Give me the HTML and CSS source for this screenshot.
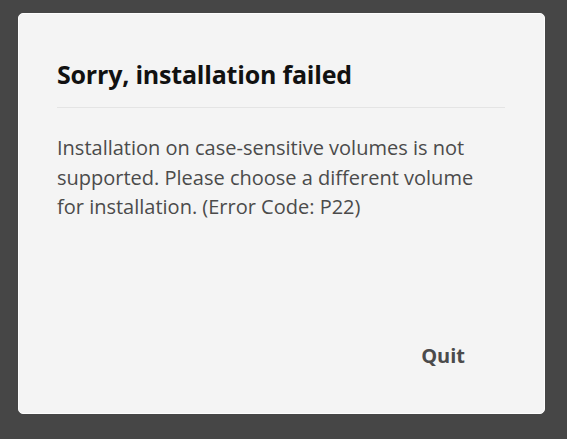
FILE: index.html
```html
<!DOCTYPE html>
<html>
<head>
<meta charset="utf-8">
<link rel="stylesheet" href="styles.css">
</head>
<body>
<div class="dialog">
  <h1 class="title">Sorry, installation failed</h1>
  <div class="divider"></div>
  <p class="message">Installation on case-sensitive volumes is not supported. Please choose a different volume for installation. (Error Code: P22)</p>
  <div class="actions">
    <button class="quit">Quit</button>
  </div>
</div>
</body>
</html>
```
FILE: styles.css
```css
html, body {
  margin: 0;
  padding: 0;
  background: #464646;
  height: 100%;
}
body {
  padding: 13px 22px 25px 18px;
  box-sizing: border-box;
  font-family: "Open Sans", Lato, sans-serif;
}
.dialog {
  background: #f4f4f4;
  border: 1px solid #fdfdfd;
  border-radius: 5px;
  height: 100%;
  box-sizing: border-box;
  padding: 44px 39px 0 38px;
  display: flex;
  flex-direction: column;
}
.title {
  margin: 0;
  font-size: 25px;
  font-weight: 700;
  letter-spacing: -0.2px;
  color: #111;
  line-height: 32px;
}
.divider {
  height: 1px;
  background: #e4e4e4;
  margin-top: 17px;
}
.message {
  margin: 25px 0 0;
  max-width: 430px;
  font-size: 20px;
  line-height: 29.5px;
  color: #4b4b4b;
}
.actions {
  margin-top: auto;
  display: flex;
  justify-content: flex-end;
  padding: 0 40px 44px 0;
}
.quit {
  background: none;
  border: none;
  padding: 0;
  font-family: inherit;
  font-size: 20px;
  font-weight: 700;
  color: #4b4b4b;
}
```
